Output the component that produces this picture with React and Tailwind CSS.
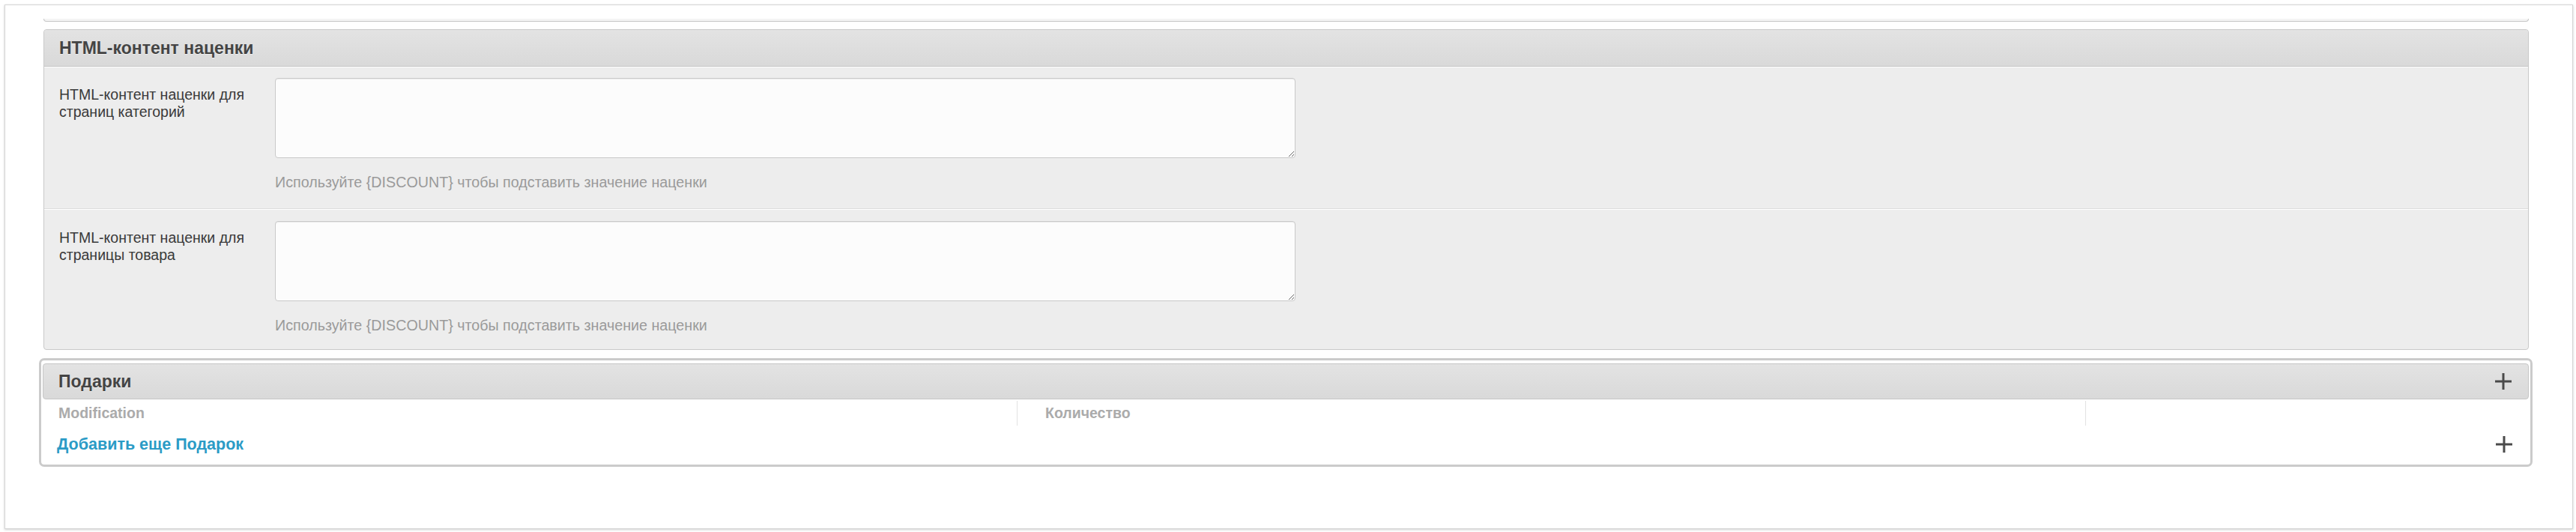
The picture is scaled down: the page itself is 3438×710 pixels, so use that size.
import React from "react";

const PlusIcon = () => (
  <svg width="22" height="22" viewBox="0 0 22 22">
    <rect x="9.5" y="0" width="3" height="22" fill="#4a4a4a" />
    <rect x="0" y="9.5" width="22" height="3" fill="#4a4a4a" />
  </svg>
);

const MarkupRow = ({ label, last }) => (
  <div
    className={
      "flex pl-[20px] pt-[15px] " +
      (last ? "border-t border-white pb-[20px]" : "border-b border-[#dcdcdc] pb-[23px]")
    }
  >
    <div className="w-[288px] shrink-0 pt-[11px] pr-[30px] text-[19.5px] leading-[23.4px] text-[#3a3a3a]">
      {label}
    </div>
    <div className="flex flex-col">
      <textarea className="w-[1362px] h-[107px] bg-[#fcfcfc] border border-[#c9c9c9] rounded-[4px] shadow-[inset_0_1px_1px_rgba(0,0,0,0.075)] outline-none p-2" />
      <p className="mt-[21px] text-[19.7px] leading-[23px] text-[#9a9a9a]">
        Используйте {"{DISCOUNT}"} чтобы подставить значение наценки
      </p>
    </div>
  </div>
);

const App = () => {
  return (
    <div className="bg-white pl-[6px] pr-[4px] pt-[6px] h-[710px] font-['Liberation_Sans',Arial,sans-serif]">
      <div className="border border-[#d6d6d6] shadow-[0_1px_3px_rgba(0,0,0,0.2)] bg-white pt-[18px] pb-[82px] pl-[45px] pr-[53px]">
        {/* previous block bottom edge */}
        <div className="mx-[6px] mr-[5px] h-[4px] bg-[#f4f4f4] border-x border-b border-[#c6c6c6] rounded-b-[4px]" />

        {/* HTML MARKUP PANEL */}
        <div className="mt-[10px] mx-[6px] mr-[5px] bg-[#ededed] border border-[#c9c9c9] rounded-[4px]">
          <div className="h-[49px] flex items-center pl-[20px] bg-linear-to-b from-[#e3e3e3] to-[#d9d9d9] border-b border-[#c6c6c6] rounded-t-[4px]">
            <h3 className="text-[23px] font-bold text-[#444] [text-shadow:0_1px_0_#f2f2f2]">
              HTML-контент наценки
            </h3>
          </div>
          <div className="shadow-[inset_0_1px_0_#fff]">
            <MarkupRow label="HTML-контент наценки для страниц категорий" />
            <MarkupRow label="HTML-контент наценки для страницы товара" last />
          </div>
        </div>

        {/* GIFTS */}
        <div className="mt-[11px] border-[3px] border-[#cbcbcb] rounded-[7px] px-[2px] pt-[4px] pb-[7px] bg-white">
          <div className="h-[48px] flex items-center justify-between pl-[20px] pr-[22px] bg-linear-to-b from-[#e3e3e3] to-[#d9d9d9] border border-[#c6c6c6] rounded-[4px]">
            <h3 className="text-[23px] font-bold text-[#444] [text-shadow:0_1px_0_#f2f2f2]">
              Подарки
            </h3>
            <button className="flex items-center">
              <PlusIcon />
            </button>
          </div>

          <div className="mt-[2px] flex h-[33px] text-[19.5px] font-bold text-[#ababab]">
            <div className="w-[1300px] pl-[21px] flex items-center">Modification</div>
            <div className="w-[1426px] pl-[37px] flex items-center border-l border-[#e2e2e2]">
              Количество
            </div>
            <div className="flex-1 border-l border-[#e2e2e2]" />
          </div>

          <div className="mt-[5px] h-[40px] flex items-center justify-between pl-[19px] pr-[22px]">
            <a href="#" className="text-[21.5px] font-bold text-[#2b9bc6]">
              Добавить еще Подарок
            </a>
            <button className="flex items-center">
              <PlusIcon />
            </button>
          </div>
        </div>
      </div>
    </div>
  );
};

export default App;
